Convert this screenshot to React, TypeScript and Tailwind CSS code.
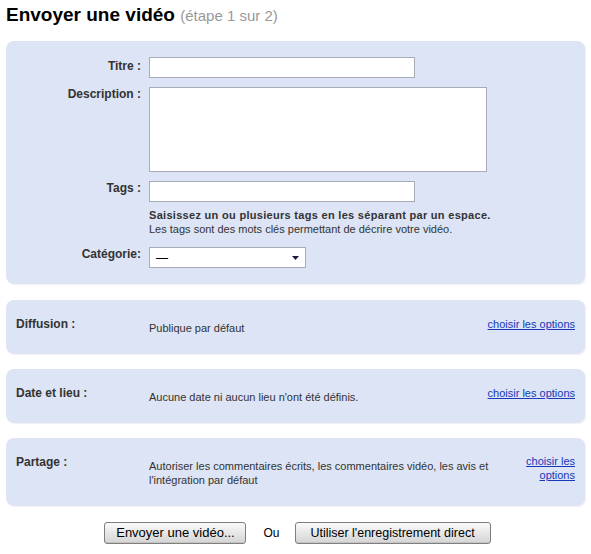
import type { ReactNode } from 'react';

const font = { fontFamily: '"Liberation Sans", Arial, sans-serif' };

function OptionPanel({ label, children, linkClass }: { label: string; children: ReactNode; linkClass?: string }) {
  return (
    <div className="mx-[6px] flex rounded-[8px] bg-[#dce4f5] pt-[17px] pb-[19px] pr-[10px] pl-[10px] shadow-[1px_1px_1px_rgba(0,0,0,0.06)]">
      <div className="w-[133px] shrink-0 text-[12px] leading-[14px] font-bold text-[#333]">{label}</div>
      <div className="flex-1 pt-[4px] text-[11px] leading-[14px] text-[#333]">{children}</div>
      <a href="#" className={`shrink-0 text-right text-[11px] leading-[14px] text-[#1838b8] underline ${linkClass ?? ''}`}>
        choisir les options
      </a>
    </div>
  );
}

function Field({ label, children, labelClass }: { label: string; children: ReactNode; labelClass?: string }) {
  return (
    <div className="flex">
      <div className={`w-[135px] shrink-0 text-right text-[12px] leading-[14px] font-bold text-[#333] ${labelClass ?? ''}`}>{label}</div>
      <div className="ml-[8px] flex-1">{children}</div>
    </div>
  );
}

export default function App() {
  return (
    <div className="min-h-screen bg-white pt-[5px]" style={font}>
      <h1 className="px-[6px] text-[19px] leading-[19px] font-bold text-black">
        Envoyer une vidéo <span className="text-[15px] font-normal text-[#999]">(étape 1 sur 2)</span>
      </h1>

      <div className="mx-[6px] mt-[16px] flex flex-col rounded-[8px] bg-[#dce4f5] pt-[16px] pb-[16px] shadow-[1px_1px_1px_rgba(0,0,0,0.06)]">
        <Field label="Titre :" labelClass="pt-[2px]">
          <div className="h-[21px] w-[266px] border border-[#a5acb5] bg-white" />
        </Field>
        <div className="mt-[9px]">
          <Field label="Description :">
            <div className="h-[85px] w-[338px] border border-[#a5acb5] bg-white" />
          </Field>
        </div>
        <div className="mt-[9px]">
          <Field label="Tags :">
            <div className="h-[21px] w-[266px] border border-[#a5acb5] bg-white" />
            <p className="mt-[6px] text-[11px] leading-[14px] font-bold tracking-[0.3px] text-[#333]">
              Saisissez un ou plusieurs tags en les séparant par un espace.
            </p>
            <p className="text-[11px] leading-[14px] text-[#333]">
              Les tags sont des mots clés permettant de décrire votre vidéo.
            </p>
          </Field>
        </div>
        <div className="mt-[11px]">
          <Field label="Catégorie:">
            <div className="flex h-[21px] w-[157px] items-center justify-between border border-[#a5acb5] bg-white pr-[6px] pl-[6px]">
              <span className="text-[12px] text-black">—</span>
              <svg width="7" height="4" viewBox="0 0 7 4">
                <path d="M0 0h7L3.5 4z" fill="#1a1a40" />
              </svg>
            </div>
          </Field>
        </div>
      </div>

      <div className="mt-[16px] flex flex-col gap-[15px]">
        <OptionPanel label="Diffusion :">Publique par défaut</OptionPanel>
        <OptionPanel label="Date et lieu :">Aucune date ni aucun lieu n'ont été définis.</OptionPanel>
        <OptionPanel label="Partage :" linkClass="w-[58px] -mt-[1px]">
          <span className="block pr-[20px]">
            Autoriser les commentaires écrits, les commentaires vidéo, les avis et l'intégration par défaut
          </span>
        </OptionPanel>
      </div>

      <div className="mt-[16px] flex items-center justify-center pl-[4px]">
        <button className="h-[22px] w-[142px] rounded-[3px] border border-[#7f7f7f] bg-gradient-to-b from-[#fafafa] to-[#d4d4d4] text-[13px] text-black shadow-[inset_0_-1px_0_rgba(0,0,0,0.08)]">
          Envoyer une vidéo...
        </button>
        <span className="ml-[17px] mr-[15px] text-[12px] text-black">Ou</span>
        <button className="h-[22px] w-[196px] rounded-[3px] border border-[#7f7f7f] bg-gradient-to-b from-[#fafafa] to-[#d4d4d4] text-[12.5px] text-black shadow-[inset_0_-1px_0_rgba(0,0,0,0.08)]">
          Utiliser l'enregistrement direct
        </button>
      </div>
    </div>
  );
}
